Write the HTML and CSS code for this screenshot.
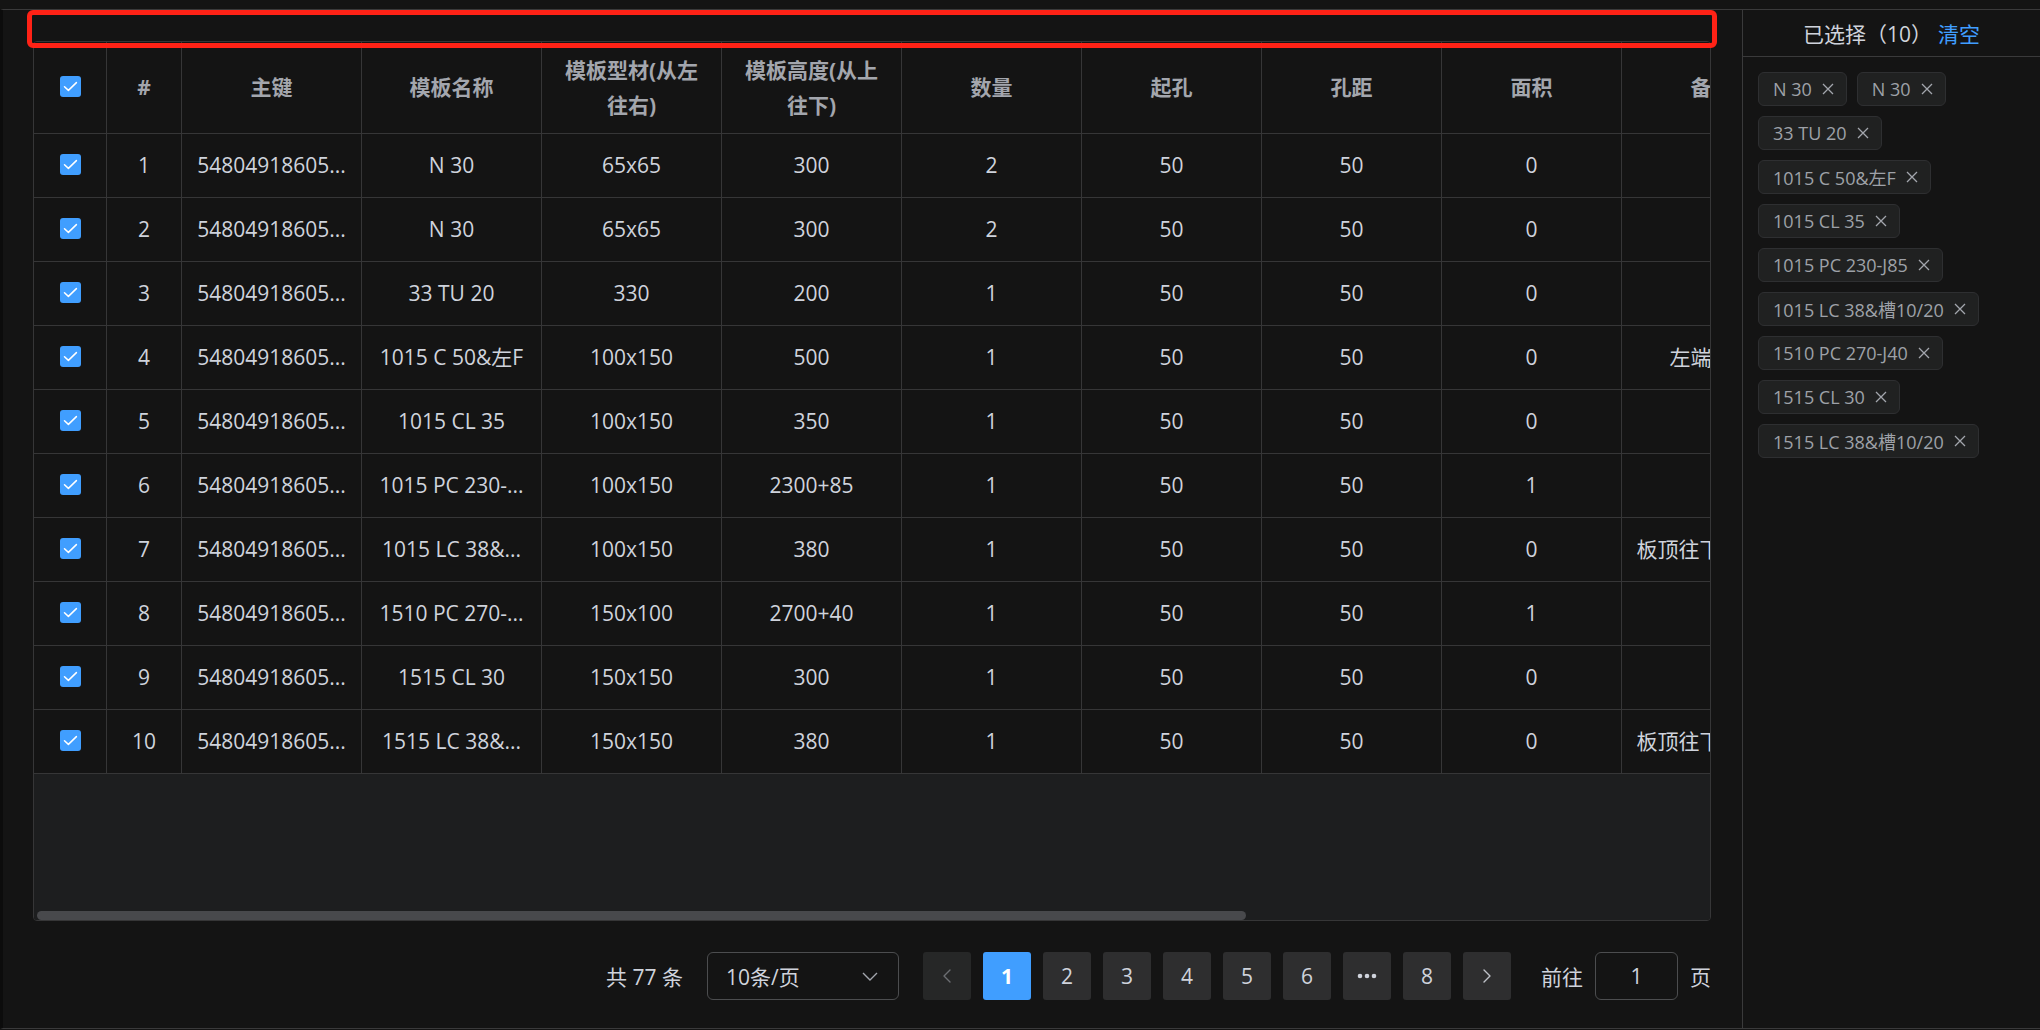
FILE: index.html
```html
<!DOCTYPE html>
<html lang="zh-CN">
<head>
<meta charset="utf-8">
<title>已选择</title>
<link rel="stylesheet" href="styles.css">
</head>
<body>
<div class="frame">
  <div class="main">
    <div class="highlight"></div>
    <div class="table-wrap">
      <div class="table-scroll">
        <table class="grid">
          <colgroup>
            <col class="c-sel"><col class="c-idx"><col class="c-w"><col class="c-w"><col class="c-w"><col class="c-w"><col class="c-w"><col class="c-w"><col class="c-w"><col class="c-w"><col class="c-w">
          </colgroup>
          <thead>
            <tr>
              <th><span class="cb"><svg viewBox="0 0 21 21"><path d="M4.5 10.8 L8.4 14.4 L16.4 6.6"/></svg></span></th>
              <th>#</th>
              <th>主键</th>
              <th>模板名称</th>
              <th>模板型材(从左往右)</th>
              <th>模板高度(从上往下)</th>
              <th>数量</th>
              <th>起孔</th>
              <th>孔距</th>
              <th>面积</th>
              <th>备注</th>
            </tr>
          </thead>
          <tbody>
            <tr><td><span class="cb"><svg viewBox="0 0 21 21"><path d="M4.5 10.8 L8.4 14.4 L16.4 6.6"/></svg></span></td><td>1</td><td>54804918605...</td><td><div class="cell">N 30</div></td><td>65x65</td><td>300</td><td>2</td><td>50</td><td>50</td><td>0</td><td><div class="cell"></div></td></tr>
            <tr><td><span class="cb"><svg viewBox="0 0 21 21"><path d="M4.5 10.8 L8.4 14.4 L16.4 6.6"/></svg></span></td><td>2</td><td>54804918605...</td><td><div class="cell">N 30</div></td><td>65x65</td><td>300</td><td>2</td><td>50</td><td>50</td><td>0</td><td><div class="cell"></div></td></tr>
            <tr><td><span class="cb"><svg viewBox="0 0 21 21"><path d="M4.5 10.8 L8.4 14.4 L16.4 6.6"/></svg></span></td><td>3</td><td>54804918605...</td><td><div class="cell">33 TU 20</div></td><td>330</td><td>200</td><td>1</td><td>50</td><td>50</td><td>0</td><td><div class="cell"></div></td></tr>
            <tr><td><span class="cb"><svg viewBox="0 0 21 21"><path d="M4.5 10.8 L8.4 14.4 L16.4 6.6"/></svg></span></td><td>4</td><td>54804918605...</td><td><div class="cell">1015 C 50&amp;左F</div></td><td>100x150</td><td>500</td><td>1</td><td>50</td><td>50</td><td>0</td><td><div class="cell">左端开槽</div></td></tr>
            <tr><td><span class="cb"><svg viewBox="0 0 21 21"><path d="M4.5 10.8 L8.4 14.4 L16.4 6.6"/></svg></span></td><td>5</td><td>54804918605...</td><td><div class="cell">1015 CL 35</div></td><td>100x150</td><td>350</td><td>1</td><td>50</td><td>50</td><td>0</td><td><div class="cell"></div></td></tr>
            <tr><td><span class="cb"><svg viewBox="0 0 21 21"><path d="M4.5 10.8 L8.4 14.4 L16.4 6.6"/></svg></span></td><td>6</td><td>54804918605...</td><td><div class="cell">1015 PC 230-...</div></td><td>100x150</td><td>2300+85</td><td>1</td><td>50</td><td>50</td><td>1</td><td><div class="cell"></div></td></tr>
            <tr><td><span class="cb"><svg viewBox="0 0 21 21"><path d="M4.5 10.8 L8.4 14.4 L16.4 6.6"/></svg></span></td><td>7</td><td>54804918605...</td><td><div class="cell">1015 LC 38&amp;...</div></td><td>100x150</td><td>380</td><td>1</td><td>50</td><td>50</td><td>0</td><td><div class="cell">板顶往下开槽10</div></td></tr>
            <tr><td><span class="cb"><svg viewBox="0 0 21 21"><path d="M4.5 10.8 L8.4 14.4 L16.4 6.6"/></svg></span></td><td>8</td><td>54804918605...</td><td><div class="cell">1510 PC 270-...</div></td><td>150x100</td><td>2700+40</td><td>1</td><td>50</td><td>50</td><td>1</td><td><div class="cell"></div></td></tr>
            <tr><td><span class="cb"><svg viewBox="0 0 21 21"><path d="M4.5 10.8 L8.4 14.4 L16.4 6.6"/></svg></span></td><td>9</td><td>54804918605...</td><td><div class="cell">1515 CL 30</div></td><td>150x150</td><td>300</td><td>1</td><td>50</td><td>50</td><td>0</td><td><div class="cell"></div></td></tr>
            <tr><td><span class="cb"><svg viewBox="0 0 21 21"><path d="M4.5 10.8 L8.4 14.4 L16.4 6.6"/></svg></span></td><td>10</td><td>54804918605...</td><td><div class="cell">1515 LC 38&amp;...</div></td><td>150x150</td><td>380</td><td>1</td><td>50</td><td>50</td><td>0</td><td><div class="cell">板顶往下开槽10</div></td></tr>
          </tbody>
        </table>
      </div>
      <div class="table-fill"><div class="thumb"></div></div>
    </div>

    <div class="pager">
      <span class="total">共 77 条</span>
      <div class="sizes">
        <span>10条/页</span>
        <svg class="arrow" viewBox="0 0 16 9"><path d="M1 1 L8 8 L15 1"/></svg>
      </div>
      <button class="pbtn nav prev" type="button"><svg viewBox="0 0 8 14"><path d="M7 1 L1 7 L7 13"/></svg></button>
      <ul class="pages">
        <li class="pbtn active">1</li>
        <li class="pbtn">2</li>
        <li class="pbtn">3</li>
        <li class="pbtn">4</li>
        <li class="pbtn">5</li>
        <li class="pbtn">6</li>
        <li class="pbtn more"><svg viewBox="0 0 20 6"><circle cx="3" cy="3" r="2.3"/><circle cx="10" cy="3" r="2.3"/><circle cx="17" cy="3" r="2.3"/></svg></li>
        <li class="pbtn">8</li>
      </ul>
      <button class="pbtn nav next" type="button"><svg viewBox="0 0 8 14"><path d="M1 1 L7 7 L1 13"/></svg></button>
      <span class="jump">前往</span>
      <div class="jump-input">1</div>
      <span class="jump-unit">页</span>
    </div>
  </div>

  <aside class="side">
    <div class="side-head">
      <span>已选择（10）</span><span class="clear">清空</span>
    </div>
    <div class="tags">
      <span class="tag">N 30<svg class="x" viewBox="0 0 12 12"><path d="M1 1 L11 11 M11 1 L1 11"/></svg></span>
      <span class="tag">N 30<svg class="x" viewBox="0 0 12 12"><path d="M1 1 L11 11 M11 1 L1 11"/></svg></span>
      <span class="tag">33 TU 20<svg class="x" viewBox="0 0 12 12"><path d="M1 1 L11 11 M11 1 L1 11"/></svg></span>
      <span class="tag">1015 C 50&amp;左F<svg class="x" viewBox="0 0 12 12"><path d="M1 1 L11 11 M11 1 L1 11"/></svg></span>
      <span class="tag">1015 CL 35<svg class="x" viewBox="0 0 12 12"><path d="M1 1 L11 11 M11 1 L1 11"/></svg></span>
      <span class="tag">1015 PC 230-J85<svg class="x" viewBox="0 0 12 12"><path d="M1 1 L11 11 M11 1 L1 11"/></svg></span>
      <span class="tag">1015 LC 38&amp;槽10/20<svg class="x" viewBox="0 0 12 12"><path d="M1 1 L11 11 M11 1 L1 11"/></svg></span>
      <span class="tag">1510 PC 270-J40<svg class="x" viewBox="0 0 12 12"><path d="M1 1 L11 11 M11 1 L1 11"/></svg></span>
      <span class="tag">1515 CL 30<svg class="x" viewBox="0 0 12 12"><path d="M1 1 L11 11 M11 1 L1 11"/></svg></span>
      <span class="tag">1515 LC 38&amp;槽10/20<svg class="x" viewBox="0 0 12 12"><path d="M1 1 L11 11 M11 1 L1 11"/></svg></span>
    </div>
  </aside>
</div>
</body>
</html>
```
FILE: styles.css
```css
* { box-sizing: border-box; }
html, body { margin: 0; padding: 0; }
body {
  width: 2040px;
  height: 1030px;
  overflow: hidden;
  background: #141414;
  color: #cfd3dc;
  font-family: "Open Sans", "Noto Sans CJK SC", sans-serif;
}

.frame {
  margin-top: 9px;
  height: 1020px;
  border-top: 1px solid #3a3a3b;
  border-bottom: 1px solid #3a3a3b;
  border-left: 3px solid #0c0c0c;
  display: flex;
}

/* main column */
.main {
  position: relative;
  flex: 1;
  min-width: 0;
  padding: 31px 31px 0 30px;
  display: flex;
  flex-direction: column;
}
.highlight {
  position: absolute;
  left: 24px;
  top: 0;
  width: 1690px;
  height: 38px;
  border: 5px solid #ff2216;
  border-radius: 6px;
  pointer-events: none;
  z-index: 2;
}

.table-wrap {
  height: 880px;
  border: 1px solid #363637;
  border-radius: 4px;
  display: flex;
  flex-direction: column;
  overflow: hidden;
}
.table-scroll { overflow: hidden; flex: none; }
.grid {
  border-collapse: separate;
  border-spacing: 0;
  table-layout: fixed;
  width: 1768px;
  font-size: 21px;
  line-height: 34.5px;
}
.c-sel { width: 73px; }
.c-idx { width: 75px; }
.c-w { width: 180px; }

.grid th, .grid td {
  border-right: 1px solid #363637;
  border-bottom: 1px solid #363637;
  text-align: center;
  vertical-align: middle;
  background: #141414;
}
.grid th {
  height: 92px;
  padding: 0 16px;
  font-weight: 700;
  color: #a3a6ad;
}
.grid td {
  height: 64px;
  padding: 0 12px;
  color: #cfd3dc;
  white-space: nowrap;
  overflow: hidden;
}
.cell {
  overflow: hidden;
  white-space: nowrap;
  text-overflow: ellipsis;
}

.cb {
  display: block;
  width: 21px;
  height: 21px;
  margin: 0 auto 3px;
  border-radius: 3px;
  background: #409eff;
}
.cb svg { display: block; width: 21px; height: 21px; }
.cb path { fill: none; stroke: #fff; stroke-width: 1.5; stroke-linecap: round; stroke-linejoin: round; }

.table-fill {
  flex: 1;
  background: #1d1e1f;
  display: flex;
  align-items: flex-end;
  padding: 0 0 0 3px;
}
.thumb {
  width: 1209px;
  height: 9px;
  border-radius: 5px;
  background: #48494c;
}

/* pagination */
.pager {
  margin-top: 31px;
  height: 48px;
  display: flex;
  align-items: center;
  justify-content: flex-end;
  font-size: 21px;
  color: #cfd3dc;
}
.total { margin-right: 24px; }
.sizes {
  width: 192px;
  height: 48px;
  border: 1px solid #4c4d4f;
  border-radius: 6px;
  display: flex;
  align-items: center;
  justify-content: space-between;
  padding: 0 20px 0 18px;
  margin-right: 24px;
}
.sizes .arrow { width: 16px; height: 9px; }
.sizes .arrow path { fill: none; stroke: #a3a6ad; stroke-width: 1.4; }

.pbtn {
  width: 48px;
  height: 48px;
  border: 0;
  border-radius: 3px;
  background: #2e2e2f;
  color: #cfd3dc;
  font: inherit;
  font-size: 21px;
  display: flex;
  align-items: center;
  justify-content: center;
  padding: 0;
}
.pbtn.active { background: #409eff; color: #fff; font-weight: 700; }
.nav svg { width: 8px; height: 14px; }
.nav path { fill: none; stroke-width: 1.4; stroke-linecap: round; stroke-linejoin: round; }
.prev { background: #262727; }
.prev path { stroke: #6c6e72; }
.next path { stroke: #bfc2c9; }
.more svg { width: 20px; height: 6px; }
.more circle { fill: #cfd3dc; }

.pages {
  list-style: none;
  margin: 0 12px;
  padding: 0;
  display: flex;
  gap: 12px;
}
.jump { margin-left: 30px; margin-right: 12px; }
.jump-input {
  width: 83px;
  height: 48px;
  border: 1px solid #4c4d4f;
  border-radius: 6px;
  display: flex;
  align-items: center;
  justify-content: center;
}
.jump-unit { margin-left: 12px; }

/* side panel */
.side {
  width: 298px;
  flex: none;
  border-left: 1px solid #3a3a3b;
  display: flex;
  flex-direction: column;
}
.side-head {
  height: 47px;
  border-bottom: 1px solid #3a3a3b;
  display: flex;
  align-items: center;
  justify-content: center;
  font-size: 21px;
  color: #cfd3dc;
}
.clear { color: #409eff; margin-left: 6px; }

.tags {
  padding: 15px;
  display: flex;
  flex-wrap: wrap;
  align-items: flex-start;
  gap: 10px;
}
.tag {
  height: 34px;
  display: inline-flex;
  align-items: center;
  padding: 0 12px 0 14px;
  border: 1px solid #2e2f31;
  border-radius: 6px;
  background: #202121;
  color: #9ea1a8;
  font-size: 18px;
  white-space: nowrap;
}
.tag .x { width: 12px; height: 12px; margin-left: 10px; }
.tag .x path { fill: none; stroke: #a3a6ad; stroke-width: 1.3; }
```
